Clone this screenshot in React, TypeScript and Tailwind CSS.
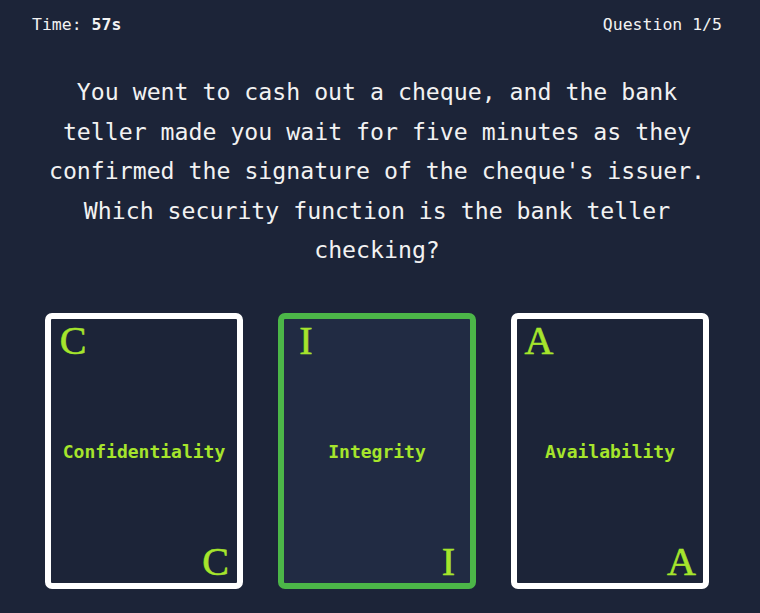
import React from 'react';

const mono = { fontFamily: '"DejaVu Sans Mono", "Liberation Mono", monospace' };
const serif = { fontFamily: '"Liberation Serif", "DejaVu Serif", serif' };

interface CardProps {
  letter: string;
  label: string;
  selected?: boolean;
}

function Card({ letter, label, selected }: CardProps) {
  return (
    <div
      className={`relative flex h-[276px] w-[198px] items-center justify-center rounded-[7px] border-[6px] ${
        selected ? 'border-[#4cb648] bg-[#212b43]' : 'border-white bg-[#1c2438]'
      }`}
    >
      <span
        className="absolute left-0 top-[-2px] w-[44px] text-center text-[40px] leading-[48px] text-[#a6e52c] [-webkit-text-stroke:0.6px_#a6e52c]"
        style={serif}
      >
        {letter}
      </span>
      <span className="mt-[2px] text-[18px] font-bold text-[#a6e52c]" style={mono}>
        {label}
      </span>
      <span
        className="absolute bottom-[-3px] right-0 w-[43px] text-center text-[40px] leading-[48px] text-[#a6e52c] [-webkit-text-stroke:0.6px_#a6e52c]"
        style={serif}
      >
        {letter}
      </span>
    </div>
  );
}

export default function App() {
  return (
    <div className="min-h-screen bg-[#1c2438] pl-8 pr-[38px] pt-[13px] text-[#f2f2f2]" style={mono}>
      <div className="flex items-center justify-between text-[16.5px] leading-6">
        <span>
          Time: <span className="font-bold">57s</span>
        </span>
        <span>Question 1/5</span>
      </div>

      <p className="mt-[35px] text-center text-[23.2px] leading-[39.5px]">
        You went to cash out a cheque, and the bank teller made you wait for five minutes as they confirmed the
        signature of the cheque's issuer. Which security function is the bank teller checking?
      </p>

      <div className="mt-[43px] flex justify-center gap-[35px]">
        <Card letter="C" label="Confidentiality" />
        <Card letter="I" label="Integrity" selected />
        <Card letter="A" label="Availability" />
      </div>
    </div>
  );
}
